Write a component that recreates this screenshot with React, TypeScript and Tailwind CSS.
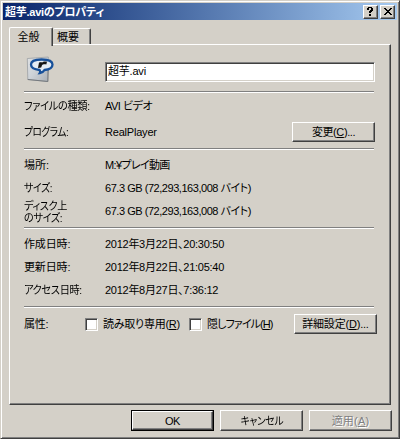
import React, { useState } from 'react';

const fileInfo = [
  { id: 0, label: '場所:', value: 'M:¥プレイ動画', labelStyle: '', valueStyle: 'tracking-[-0.65px]' },
  { id: 1, label: 'サイズ:', value: '67.3 GB (72,293,163,008 バイト)', labelStyle: 'tracking-[-0.4px] scale-x-90', valueStyle: 'tracking-[-0.46px]' },
];

const dates = [
  { id: 0, label: '作成日時:', value: '2012年3月22日、20:30:50', labelStyle: 'tracking-[-0.15px]' },
  { id: 1, label: '更新日時:', value: '2012年8月22日、21:05:40', labelStyle: 'tracking-[-0.15px]' },
  { id: 2, label: 'アクセス日時:', value: '2012年8月27日、7:36:12', labelStyle: 'tracking-[-0.4px] scale-x-93' },
];

const Separator = () => <div className="h-[2px] w-[350px] shrink-0 border-t border-b border-t-[#808080] border-b-white" />;

const raised =
  'border border-t-white border-l-white border-r-[#404040] border-b-[#404040] shadow-[inset_-1px_-1px_0_#808080]';

const Button = ({ className = '', children }: { className?: string; children: React.ReactNode }) => (
  <button className={`flex shrink-0 items-center justify-center whitespace-nowrap bg-[#d4d0c8] ${raised} ${className}`}>
    {children}
  </button>
);

const Check = ({ className, children }: { className: string; children: React.ReactNode }) => {
  const [checked, setChecked] = useState(false);

  return (
    <button onClick={() => setChecked(!checked)} className={`flex shrink-0 items-center whitespace-nowrap ${className}`}>
      <span className="mr-[5px] flex h-[13px] w-[13px] items-center justify-center border border-t-[#808080] border-l-[#808080] border-r-white border-b-white bg-white shadow-[inset_1px_1px_0_#404040,inset_-1px_-1px_0_#d4d0c8]">
        {checked && (
          <svg width="7" height="7" viewBox="0 0 7 7">
            <path d="M0 3l2.5 2.5L7 1" fill="none" stroke="#000" strokeWidth="2" />
          </svg>
        )}
      </span>
      {children}
    </button>
  );
};

const FileIcon = () => (
  <svg width="28" height="28" viewBox="0 0 28 28">
    <defs>
      <linearGradient id="paper" x1="0" y1="0" x2="1" y2="0.8">
        <stop offset="0" stopColor="#dfe1e3" />
        <stop offset="0.5" stopColor="#cdd2d8" />
        <stop offset="1" stopColor="#b0b5bb" />
      </linearGradient>
    </defs>
    <path d="M1.300 3.500L22.300 2L21.800 26.500L1.800 24.500Z" fill="url(#paper)" stroke="#9c9fa3" strokeWidth="0.8" />
    <path d="M1.800 24.500L21.800 26.500L22.200 14" fill="none" stroke="#75797e" strokeWidth="1" />
    <path
      d="M15.500 4.500C22 4.500 26.500 6.200 26.500 9.500C26.500 12.800 22.500 14.600 18.500 15C17.500 17 16 17.600 13.800 18C14.400 17 14.300 16 13.600 15C8.500 14.500 5 12.800 5 9.500C5 6.200 9 4.500 15.500 4.500Z"
      fill="#e6edf4"
      stroke="#17509a"
      strokeWidth="2.300"
    />
    <path d="M13 7.500L15.500 7L15.800 7.800C17 6.600 19 6.400 21 6.800L20.300 9.400C18 9.100 16.700 9.400 16 10.200L15.200 12.600L12 13Z" fill="#161616" />
  </svg>
);

export default function App() {
  return (
    <div className="flex h-[439px] w-[400px] flex-col overflow-hidden border border-t-[#d4d0c8] border-l-[#d4d0c8] border-r-[#404040] border-b-[#404040] bg-[#d4d0c8] p-[2px] font-['Liberation_Sans','Noto_Sans_CJK_JP',sans-serif] text-[11px] leading-[14px] text-black shadow-[inset_1px_1px_0_#fff,inset_-1px_-1px_0_#808080] [font-feature-settings:'palt']">
      {/* タイトルバー */}
      <div className="flex h-[17px] shrink-0 items-center bg-linear-to-r from-[#0a246a] to-[#a6caf0] pr-[2px] pl-[2px]">
        <span className="flex-1 whitespace-nowrap font-bold tracking-[-0.25px] text-white">超芋.aviのプロパティ</span>
        <button className={`flex h-[14px] w-[15px] items-center justify-center bg-[#d4d0c8] ${raised}`}>
          <svg width="7" height="9" viewBox="0 0 7 9" shapeRendering="crispEdges">
            <path d="M1 0h4v1h1v3h-1v1h-1v1h-2v-2h1v-1h1v-2h-2v2h-2v-2h1zM2 7h2v2h-2z" fill="#000" />
          </svg>
        </button>
        <button className={`ml-[2px] flex h-[14px] w-[15px] items-center justify-center bg-[#d4d0c8] ${raised}`}>
          <svg width="8" height="7" viewBox="0 0 8 7" shapeRendering="crispEdges">
            <path d="M0 0h2v1h1v1h2v-1h1v-1h2v1h-1v1h-1v1h-1v1h1v1h1v1h1v1h-2v-1h-1v-1h-2v1h-1v1h-2v-1h1v-1h1v-1h1v-1h-1v-1h-1v-1h-1z" fill="#000" />
          </svg>
        </button>
      </div>

      {/* タブ */}
      <div className="mt-[6px] ml-[6px] flex h-[18px] shrink-0 items-end">
        <div className="relative z-10 -mb-[2px] flex h-[19px] w-[44px] items-center justify-center rounded-t-[2px] border border-b-0 border-t-white border-l-white border-r-[#404040] bg-[#d4d0c8] pr-[5px] shadow-[inset_-1px_0_0_#808080]">
          全般
        </div>
        <div className="flex h-[16px] w-[38px] items-center justify-center rounded-t-[2px] border border-b-0 border-l-0 border-t-white border-r-[#404040] pt-px pr-[7px] shadow-[inset_-1px_0_0_#808080]">
          概要
        </div>
      </div>

      {/* 全般パネル */}
      <div className="ml-[6px] flex h-[361px] w-[382px] shrink-0 flex-col border border-t-white border-l-white border-r-[#404040] border-b-[#404040] pl-[14px] shadow-[inset_-1px_-1px_0_#808080]">
        <div className="flex h-[46px] shrink-0 items-start pl-[2px]">
          <div className="mt-[10px] w-[79px]">
            <FileIcon />
          </div>
          <input
            defaultValue="超芋.avi"
            className="mt-[17px] h-[20px] w-[270px] border border-t-[#808080] border-l-[#808080] border-r-white border-b-white bg-white px-[2px] pb-[4px] leading-[14px] tracking-[-0.2px] shadow-[inset_1px_1px_0_#404040,inset_-1px_-1px_0_#d4d0c8] outline-none"
          />
        </div>
        <Separator />

        <div className="h-[55px] w-[351px] shrink-0">
          <div className="flex h-[26px] items-center whitespace-nowrap">
            <span className="w-[81px] origin-left scale-x-93 tracking-[-0.4px]">ファイルの種類:</span>
            <span className="tracking-[-0.5px]">AVI ビデオ</span>
          </div>
          <div className="flex h-[26px] items-center whitespace-nowrap">
            <span className="w-[81px] origin-left scale-x-88 tracking-[-0.5px]">プログラム:</span>
            <span className="flex-1 tracking-[-0.2px]">RealPlayer</span>
            <Button className="h-[20px] w-[83px] tracking-[-0.4px]">
              変更(<u>C</u>)...
            </Button>
          </div>
        </div>
        <Separator />

        <div className="h-[77px] shrink-0 pt-[3px]">
          {fileInfo.map((row) => (
            <div key={row.id} className="flex h-[23px] items-center whitespace-nowrap">
              <span className={`w-[81px] origin-left ${row.labelStyle}`}>{row.label}</span>
              <span className={row.valueStyle}>{row.value}</span>
            </div>
          ))}
          <div className="flex h-[23px] items-center whitespace-nowrap">
            <span className="mt-[3px] w-[81px] origin-left scale-x-92 leading-[12px] tracking-[-0.4px]">
              ディスク上
              <br />
              のサイズ:
            </span>
            <span className="tracking-[-0.46px]">67.3 GB (72,293,163,008 バイト)</span>
          </div>
        </div>
        <Separator />

        <div className="h-[77px] shrink-0 pt-[3px]">
          {dates.map((row) => (
            <div key={row.id} className="flex h-[23px] items-center whitespace-nowrap">
              <span className={`w-[81px] origin-left ${row.labelStyle}`}>{row.label}</span>
              <span className="tracking-[-0.27px]">{row.value}</span>
            </div>
          ))}
        </div>
        <Separator />

        <div className="flex h-[32px] w-[353px] shrink-0 items-center">
          <span className="w-[61px] tracking-[-0.2px]">属性:</span>
          <Check className="w-[104px] tracking-[-0.25px]">
            読み取り専用(<u>R</u>)
          </Check>
          <Check className="w-[105px] tracking-[-0.9px]">
            隠しファイル(<u>H</u>)
          </Check>
          <Button className="h-[20px] w-[83px] tracking-[-0.2px]">
            詳細設定(<u>D</u>)...
          </Button>
        </div>
      </div>

      {/* ボタン */}
      <div className="mt-[5px] flex shrink-0 justify-end gap-[6px] pr-[5px]">
        <div className="border border-black">
          <Button className="h-[19px] w-[81px] tracking-[-0.5px]">OK</Button>
        </div>
        <Button className="h-[21px] w-[83px] tracking-[-0.4px]">
          <span className="scale-x-89">キャンセル</span>
        </Button>
        <Button className="h-[21px] w-[83px] tracking-[0.2px] text-[#808080] [text-shadow:1px_1px_0_#fff]">
          適用(<u>A</u>)
        </Button>
      </div>
    </div>
  );
}
